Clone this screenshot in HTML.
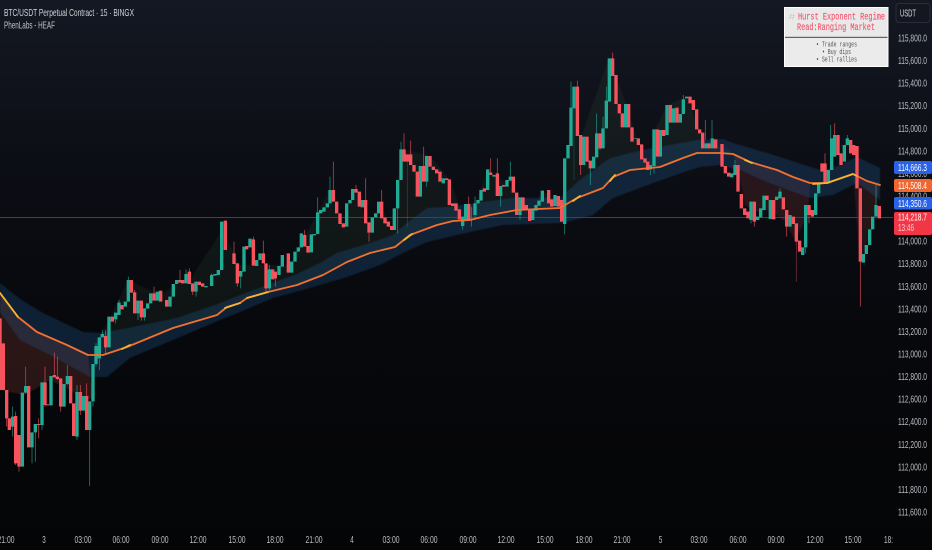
<!DOCTYPE html>
<html><head><meta charset="utf-8"><title>BTC/USDT chart</title>
<style>
html,body{margin:0;padding:0;background:#000}
svg{display:block}
text{font-family:"Liberation Sans",sans-serif}
.p{font-size:10.5px;fill:#bcbfc5}
.t{font-size:10.5px;fill:#bcbfc5;text-anchor:middle}
.w{font-size:10.5px;fill:#fff}
.m{font-family:"Liberation Mono",monospace}
</style></head><body>
<svg width="932" height="550" viewBox="0 0 932 550" xmlns="http://www.w3.org/2000/svg">
<defs>
<linearGradient id="bg" x1="0" y1="0" x2="0" y2="1"><stop offset="0" stop-color="#141822"/><stop offset=".3" stop-color="#0c0e15"/><stop offset=".6" stop-color="#07080c"/><stop offset="1" stop-color="#040506"/></linearGradient>
<filter id="b" x="-5%" y="-5%" width="110%" height="110%"><feGaussianBlur stdDeviation=".6"/></filter>
<filter id="b2" x="-5%" y="-5%" width="110%" height="110%"><feGaussianBlur stdDeviation=".25"/></filter>
</defs>
<rect width="932" height="550" fill="url(#bg)"/>

<!-- regime fills -->
<path fill="#4a7a50" fill-opacity=".11" filter="url(#b)" d="M95 345L110 318 128 280 160 295 175 285 190 280 222 230 240 265 265 265 290 265 300 245 330 190 343 227 356 189 370 232 379 202 393 230 401 149 430 156 450 180 463 217 475 205 488 169 517 192 530 217 542 191 563 207 571 108 574 87 580 140 609 58 627 107 640 150 648 168 655 130 667 105 687 97 703 140 730 150 733 154 697 153 683 158 660 167 630 170 613 177 603 188 577 198 560 208 517 210 490 215 470 220 453 221 437 225 410 235 395 247 370 253 347 262 323 275 297 285 268 292 247 298 227 307 217 315 173 328 127 347 103 355Z"/>
<path fill="#8a3a2c" fill-opacity=".27" filter="url(#b)" d="M0 293L18 317 37 332 67 345 88 355 93 398 85 400 70 390 50 380 25 395 0 390Z"/>
<path fill="#8a3a2c" fill-opacity=".22" filter="url(#b)" d="M733 154L750 162 777 170 793 177 810 183 808 215 795 240 785 222 770 210 755 212 745 205 738 170Z"/>
<path fill="#8a3a2c" fill-opacity=".2" filter="url(#b)" d="M853 174L867 181 880 185 876 205 868 240 860 262Z"/>

<!-- band -->
<path fill="#2a6db0" fill-opacity=".24" filter="url(#b)" d="M0 283L20 299 43 313 83 332 100 333 128 328 177 318 220 303 240 295 297 274 320 263 337 253 370 243 393 235 407 223 427 208 447 207 475 203 513 198 560 198 580 180 610 158 643 150 697 140 723 139 733 143 767 153 820 170 833 168 857 157 880 168 880 200 857 183 833 195 810 198 767 182 740 170 720 165 700 167 690 170 653 183 613 198 593 215 563 223 503 225 470 232 457 235 427 242 403 253 380 265 347 277 313 287 273 298 240 312 220 320 173 340 130 358 107 377 90 377 50 355 20 340 0 312Z"/>

<!-- current price line -->
<rect x="0" y="217" width="893" height="1" fill="#7c2a32"/>

<!-- candles, traced groups -->
<g filter="url(#b2)" fill="none">
<g transform="translate(0,260) scale(.33333)">
<path stroke="#22ab94" stroke-width="2.4" stroke-opacity=".75" d="M38 440V530M77 320V400M96 560V610M106 515V605M126 495V510M202 315V375M231 375V540M269 510V678M279 424V440M288 250V320M298 290V330M307 210V225M347 178V190M357 120V130M385 50V62M414 160V180M433 170V182M558 28V45M588 95V110M635 40V48"/>
<path stroke="#f7525f" stroke-width="2.4" stroke-opacity=".75" d="M20 390V500M47 455V615M57 620V635M116 475V535M135 320V440M163 278V350M172 290V360M182 440V455M241 375V465M260 370V412M317 210V280M404 90V100M424 172V182M462 80V105M540 30V62M568 25V40M578 95V105"/>
<path stroke="#22ab94" stroke-width="10" d="M38 470V500M67 398V620M77 378V398M96 517V562M106 492V517M126 367V495M153 348V436M192 372V440M202 348V372M231 396V530M250 408V452M269 424V510M279 312V424M288 258V312M298 232V295M307 222V232M327 170V262M347 158V178M357 128V165M376 125V140M385 60V125M414 122V160M433 145V172M443 130V146M452 100V130M472 95V122M510 110V140M520 72V110M530 60V72M558 42V70M588 65V95M618 78V82M635 45V78M645 42V47M655 30V45M665 -115V30"/>
<path stroke="#f7525f" stroke-width="10" d="M0 175V390M10 250V390M20 390V475M28 475V510M47 468V610M57 525V620M86 378V562M116 492V495M135 367V435M143 433V436M163 345V352M172 350V357M182 355V440M212 348V430M221 430V528M241 396V452M260 408V510M317 228V262M337 170V185M366 135V148M394 60V98M404 97V160M424 122V172M462 100V122M482 92V125M500 120V140M540 60V68M548 60V70M568 35V72M578 70V95M598 65V75M608 70V80M676 -118V-30"/>
</g>
<g transform="translate(230,120) scale(.33333)">
<path stroke="#22ab94" stroke-width="2.4" stroke-opacity=".75" d="M32 470V505M118 435V515M263 232V280M300 170V212M513 65V90M503 265V340M590 185V200M698 318V330"/>
<path stroke="#f7525f" stroke-width="2.4" stroke-opacity=".75" d="M12 365V432M22 490V500M70 350V360M100 362V400M108 440V515M136 475V500M224 330V350M310 125V212M378 195V210M407 175V242M417 338V365M455 210V250M522 40V90M542 62V105M581 80V140M716 230V255"/>
<path stroke="#f7525f" stroke-width="2.4" stroke-opacity=".3" d="M532 125V320"/>
<path stroke="#22ab94" stroke-width="10" d="M32 453V470M42 380V455M60 356V382M80 420V438M90 400V420M118 448V505M147 438V465M157 405V440M185 425V458M195 395V425M205 382V395M214 340V382M244 343V397M253 342V346M263 277V342M272 270V280M282 262V275M292 250V262M300 210V250M350 250V320M360 240V250M368 207V240M397 240V262M427 292V338M437 280V292M446 245V280M493 265V330M503 180V265M513 88V180M571 138V230M590 108V185M640 175V190M698 290V318M707 252V300"/>
<path stroke="#f7525f" stroke-width="10" d="M12 400V432M22 430V490M50 378V388M70 358V437M100 400V430M108 430V505M128 448V478M136 455V475M175 400V458M224 345V380M234 378V398M310 210V245M320 245V280M330 280V312M340 310V322M378 207V218M388 215V260M407 240V310M417 307V338M455 245V295M465 293V310M475 305V320M485 318V330M522 88V125M532 103V125M542 103V135M552 135V155M562 155V230M581 138V185M600 108V140M610 140V150M620 148V160M630 155V185M650 175V180M658 178V255M668 250V258M678 250V272M688 268V298M716 252V300"/>
</g>
<g transform="translate(470,40) scale(.33333)">
<path stroke="#22ab94" stroke-width="2.4" stroke-opacity=".75" d="M15 470V540M92 468V500M121 365V412M150 525V540M284 552V583M303 125V205M380 220V282M399 230V265M409 140V182M361 385V435M541 388V405M640 165V180M552 378V400"/>
<path stroke="#22ab94" stroke-width="2.4" stroke-opacity=".3" d="M312 205V420"/>
<path stroke="#f7525f" stroke-width="2.4" stroke-opacity=".75" d="M4 500V560M62 355V400M82 355V400M322 122V142M428 38V58M332 375V405M390 325V330"/>
<path stroke="#22ab94" stroke-width="10" d="M15 490V525M24 480V490M33 450V482M53 388V450M72 405V410M92 438V468M111 420V440M121 410V422M150 472V525M188 510V540M198 495V512M207 482V497M217 452V485M255 465V498M284 355V552M294 315V355M303 203V318M312 140V205M341 290V375M371 350V385M380 280V352M399 265V325M409 182V265M418 55V185M467 192V262M496 295V297M541 375V388M552 268V378M571 270V350M591 195V285M611 205V248M631 222V248M640 178V222M650 170V175M708 310V325"/>
<path stroke="#f7525f" stroke-width="10" d="M43 445V455M62 398V405M82 400V468M101 435V440M130 410V458M140 458V525M159 472V508M169 495V510M179 510V543M236 450V490M245 478V500M265 468V500M275 480V545M322 140V288M332 285V375M351 290V365M361 362V385M390 280V325M428 55V108M438 105V192M448 192V220M457 220V262M476 192V262M486 262V305M505 295V315M515 313V358M525 355V368M533 365V390M562 268V350M581 270V288M601 195V248M621 203V248M660 170V190M670 180V210M680 208V268M689 268V280M698 278V325M717 310V325"/>
</g>
<g transform="translate(700,120) scale(.33333)">
<path stroke="#22ab94" stroke-width="2.4" stroke-opacity=".75" d="M392 15V60M442 45V58M528 195V258M317 382V400M105 120V135M153 245V310M182 265V280M240 205V218M16 0V60M36 0V60"/>
<path stroke="#f7525f" stroke-width="2.4" stroke-opacity=".75" d="M481 425V560M260 320V350M163 305V320M375 100V130M404 10V50M327 285V310"/>
<path stroke="#f7525f" stroke-width="2.4" stroke-opacity=".45" d="M289 365V485"/>
<path stroke="#22ab94" stroke-width="10" d="M37 55V85M95 160V172M105 135V165M153 245V300M173 290V300M182 265V292M192 227V270M211 240V297M230 230V240M240 215V235M270 285V320M308 382V405M317 255V382M347 220V285M356 190V220M385 150V190M395 55V150M404 45V110M433 75V125M442 55V75M490 402V428M499 375V402M509 328V375M518 290V328M528 255V290"/>
<path stroke="#f7525f" stroke-width="10" d="M47 58V85M66 72V140M76 138V160M86 158V170M114 135V215M124 222V265M134 265V285M144 275V295M163 245V305M201 227V240M221 240V298M250 232V268M260 270V320M280 290V312M289 310V365M299 362V395M327 255V285M337 270V290M366 130V155M375 130V190M414 45V105M423 100V135M452 60V100M461 75V105M471 78V205M481 205V425M538 258V295"/>
</g>
</g>

<!-- EMA -->
<g fill="none" stroke-linejoin="round" stroke-linecap="round" filter="url(#b2)">
<path stroke="#f4702f" stroke-width="1.8" d="M0 293L18 317 37 332 67 345 88 355 103 355 127 347 173 328 217 315 227 307 240 303 247 298 268 292 297 285 323 275 347 262 370 253 395 247 410 235 437 225 453 221 470 220 490 215 517 210 560 208 577 198 603 188 613 177 630 170 660 167 683 158 697 153 720 153 733 154 750 162 777 170 793 177 810 183 827 183 853 174 867 181 880 185"/>
<path stroke="#f6b52e" stroke-width="1.8" d="M0 293L18 317M122 349L130 345M225 308L240 303M247 298L268 292M404 240L412 234M573 201L580 196M610 181L615 175M745 160L752 163M813 184L827 183 853 174 857 176"/>
</g>

<!-- legend -->
<text x="4" y="16" class="w" style="fill:#d0d3d9" textLength="130" lengthAdjust="spacingAndGlyphs">BTC/USDT Perpetual Contract · 15 · BINGX</text>
<text x="4" y="28.500" class="w" style="fill:#bfc2c9" textLength="51" lengthAdjust="spacingAndGlyphs">PhenLabs - HEAF</text>

<!-- axis prices -->
<g>
<text class="p" x="898" y="41.500" textLength="29" lengthAdjust="spacingAndGlyphs">115,800.0</text>
<text class="p" x="898" y="64" textLength="29" lengthAdjust="spacingAndGlyphs">115,600.0</text>
<text class="p" x="898" y="86.600" textLength="29" lengthAdjust="spacingAndGlyphs">115,400.0</text>
<text class="p" x="898" y="109.200" textLength="29" lengthAdjust="spacingAndGlyphs">115,200.0</text>
<text class="p" x="898" y="131.800" textLength="29" lengthAdjust="spacingAndGlyphs">115,000.0</text>
<text class="p" x="898" y="154.300" textLength="29" lengthAdjust="spacingAndGlyphs">114,800.0</text>
<text class="p" x="898" y="176.900" textLength="29" lengthAdjust="spacingAndGlyphs">114,600.0</text>
<text class="p" x="898" y="199.500" textLength="29" lengthAdjust="spacingAndGlyphs">114,400.0</text>
<text class="p" x="898" y="244.600" textLength="29" lengthAdjust="spacingAndGlyphs">114,000.0</text>
<text class="p" x="898" y="267.200" textLength="29" lengthAdjust="spacingAndGlyphs">113,800.0</text>
<text class="p" x="898" y="289.800" textLength="29" lengthAdjust="spacingAndGlyphs">113,600.0</text>
<text class="p" x="898" y="312.400" textLength="29" lengthAdjust="spacingAndGlyphs">113,400.0</text>
<text class="p" x="898" y="334.900" textLength="29" lengthAdjust="spacingAndGlyphs">113,200.0</text>
<text class="p" x="898" y="357.500" textLength="29" lengthAdjust="spacingAndGlyphs">113,000.0</text>
<text class="p" x="898" y="380.100" textLength="29" lengthAdjust="spacingAndGlyphs">112,800.0</text>
<text class="p" x="898" y="402.600" textLength="29" lengthAdjust="spacingAndGlyphs">112,600.0</text>
<text class="p" x="898" y="425.200" textLength="29" lengthAdjust="spacingAndGlyphs">112,400.0</text>
<text class="p" x="898" y="447.800" textLength="29" lengthAdjust="spacingAndGlyphs">112,200.0</text>
<text class="p" x="898" y="470.400" textLength="29" lengthAdjust="spacingAndGlyphs">112,000.0</text>
<text class="p" x="898" y="492.900" textLength="29" lengthAdjust="spacingAndGlyphs">111,800.0</text>
<text class="p" x="898" y="515.500" textLength="29" lengthAdjust="spacingAndGlyphs">111,600.0</text>
</g>

<!-- time axis -->
<g>
<text class="t" x="6" y="543" textLength="17" lengthAdjust="spacingAndGlyphs">21:00</text>
<text class="t" x="44" y="543" textLength="3.500" lengthAdjust="spacingAndGlyphs">3</text>
<text class="t" x="83" y="543" textLength="17" lengthAdjust="spacingAndGlyphs">03:00</text>
<text class="t" x="121" y="543" textLength="17" lengthAdjust="spacingAndGlyphs">06:00</text>
<text class="t" x="160" y="543" textLength="17" lengthAdjust="spacingAndGlyphs">09:00</text>
<text class="t" x="198" y="543" textLength="17" lengthAdjust="spacingAndGlyphs">12:00</text>
<text class="t" x="237" y="543" textLength="17" lengthAdjust="spacingAndGlyphs">15:00</text>
<text class="t" x="275" y="543" textLength="17" lengthAdjust="spacingAndGlyphs">18:00</text>
<text class="t" x="314" y="543" textLength="17" lengthAdjust="spacingAndGlyphs">21:00</text>
<text class="t" x="352" y="543" textLength="3.500" lengthAdjust="spacingAndGlyphs">4</text>
<text class="t" x="391" y="543" textLength="17" lengthAdjust="spacingAndGlyphs">03:00</text>
<text class="t" x="429" y="543" textLength="17" lengthAdjust="spacingAndGlyphs">06:00</text>
<text class="t" x="468" y="543" textLength="17" lengthAdjust="spacingAndGlyphs">09:00</text>
<text class="t" x="506" y="543" textLength="17" lengthAdjust="spacingAndGlyphs">12:00</text>
<text class="t" x="545" y="543" textLength="17" lengthAdjust="spacingAndGlyphs">15:00</text>
<text class="t" x="584" y="543" textLength="17" lengthAdjust="spacingAndGlyphs">18:00</text>
<text class="t" x="622" y="543" textLength="17" lengthAdjust="spacingAndGlyphs">21:00</text>
<text class="t" x="660.500" y="543" textLength="3.500" lengthAdjust="spacingAndGlyphs">5</text>
<text class="t" x="699" y="543" textLength="17" lengthAdjust="spacingAndGlyphs">03:00</text>
<text class="t" x="738" y="543" textLength="17" lengthAdjust="spacingAndGlyphs">06:00</text>
<text class="t" x="776" y="543" textLength="17" lengthAdjust="spacingAndGlyphs">09:00</text>
<text class="t" x="815" y="543" textLength="17" lengthAdjust="spacingAndGlyphs">12:00</text>
<text class="t" x="853" y="543" textLength="17" lengthAdjust="spacingAndGlyphs">15:00</text>
<text x="884" y="543" class="p" textLength="9" lengthAdjust="spacingAndGlyphs">18:</text>
</g>

<!-- price tags -->
<rect x="894" y="161" width="38" height="13" rx="2" fill="#2962e8"/>
<text x="898" y="171" class="w" textLength="29" lengthAdjust="spacingAndGlyphs">114,666.3</text>
<rect x="894" y="179" width="38" height="13" rx="2" fill="#f0662e"/>
<text x="898" y="189" class="w" textLength="29" lengthAdjust="spacingAndGlyphs">114,508.4</text>
<rect x="894" y="197" width="38" height="12.500" rx="2" fill="#2962e8"/>
<text x="898" y="206.800" class="w" textLength="29" lengthAdjust="spacingAndGlyphs">114,350.6</text>
<rect x="894" y="212" width="38" height="23" rx="2" fill="#f23645"/>
<text x="898" y="220.500" class="w" textLength="29" lengthAdjust="spacingAndGlyphs">114,218.7</text>
<text x="898" y="231" class="w" style="fill:#fbd0d4" textLength="16" lengthAdjust="spacingAndGlyphs">13:46</text>

<!-- USDT button -->
<rect x="896" y="3.500" width="34" height="19" rx="3" fill="#14171f" stroke="#2a2e39"/>
<text x="900" y="16.500" class="w" style="fill:#d8dae0" textLength="16" lengthAdjust="spacingAndGlyphs">USDT</text>

<!-- Hurst table -->
<rect x="784" y="7" width="104.500" height="60" fill="#fff"/>
<rect x="785" y="8" width="102.500" height="28.500" fill="#e9e9e9"/>
<rect x="785" y="38" width="102.500" height="28" fill="#ebebeb"/>
<rect x="785" y="36.800" width="102.500" height="1" fill="#3a3d44"/>
<text x="788.500" y="19.500" class="m" style="font-size:9px;fill:#c9c9c9" textLength="7" lengthAdjust="spacingAndGlyphs">#</text>
<text x="798" y="19.500" class="m" style="font-size:10px;fill:#f0566f;stroke:#f0566f;stroke-width:.15" textLength="87" lengthAdjust="spacingAndGlyphs">Hurst Exponent Regime</text>
<text x="797" y="30" class="m" style="font-size:10px;fill:#f0566f;stroke:#f0566f;stroke-width:.15" textLength="78" lengthAdjust="spacingAndGlyphs">Read:Ranging Market</text>
<text x="816" y="46.500" class="m" style="font-size:7px;fill:#4e5158" textLength="41" lengthAdjust="spacingAndGlyphs">• Trade ranges</text>
<text x="822" y="54" class="m" style="font-size:7px;fill:#4e5158" textLength="29" lengthAdjust="spacingAndGlyphs">• Buy dips</text>
<text x="816" y="61.500" class="m" style="font-size:7px;fill:#4e5158" textLength="41" lengthAdjust="spacingAndGlyphs">• Sell rallies</text>
</svg>
</body></html>
